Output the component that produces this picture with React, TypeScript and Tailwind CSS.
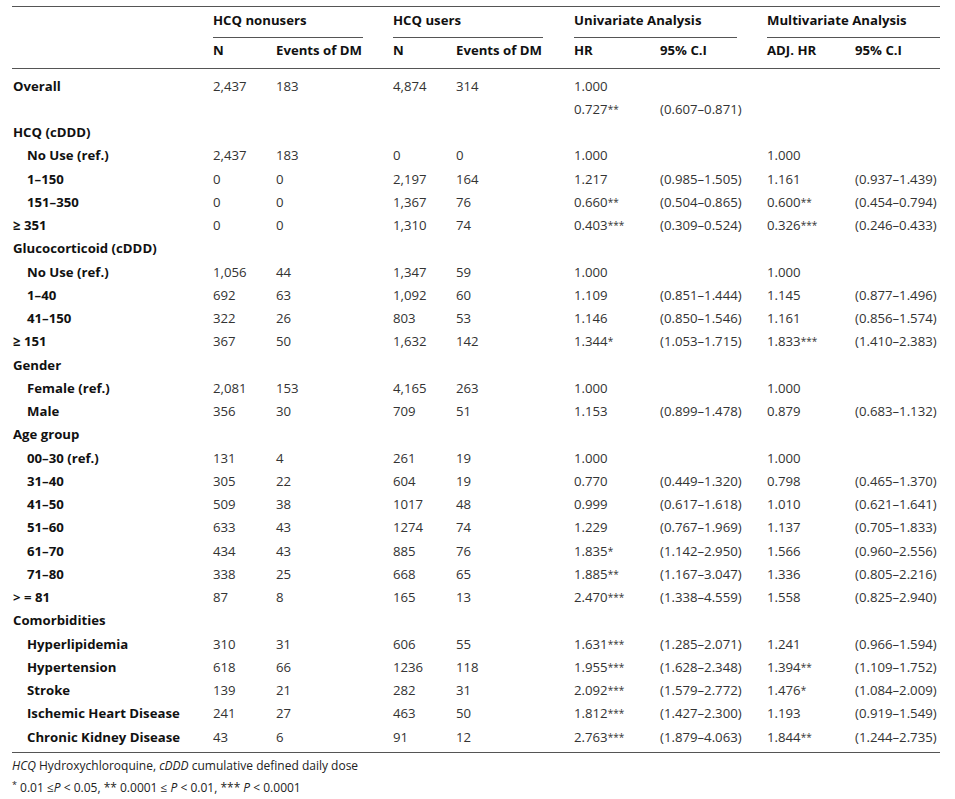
import React from 'react';

type Row = {
  label: string;
  kind: 'group' | 'sub' | 'top';
  vals?: string[];
};

const GRID = 'grid grid-cols-[201px_63px_117px_63px_118px_86px_107px_88px_85px]';

// value strings: trailing asterisks are rendered as superscript
const rows: Row[] = [
  { label: 'Overall', kind: 'top', vals: ['2,437', '183', '4,874', '314', '1.000', '', '', ''] },
  { label: '', kind: 'top', vals: ['', '', '', '', '0.727**', '(0.607–0.871)', '', ''] },
  { label: 'HCQ (cDDD)', kind: 'group' },
  { label: 'No Use (ref.)', kind: 'sub', vals: ['2,437', '183', '0', '0', '1.000', '', '1.000', ''] },
  { label: '1–150', kind: 'sub', vals: ['0', '0', '2,197', '164', '1.217', '(0.985–1.505)', '1.161', '(0.937–1.439)'] },
  { label: '151–350', kind: 'sub', vals: ['0', '0', '1,367', '76', '0.660**', '(0.504–0.865)', '0.600**', '(0.454–0.794)'] },
  { label: '≥ 351', kind: 'top', vals: ['0', '0', '1,310', '74', '0.403***', '(0.309–0.524)', '0.326***', '(0.246–0.433)'] },
  { label: 'Glucocorticoid (cDDD)', kind: 'group' },
  { label: 'No Use (ref.)', kind: 'sub', vals: ['1,056', '44', '1,347', '59', '1.000', '', '1.000', ''] },
  { label: '1–40', kind: 'sub', vals: ['692', '63', '1,092', '60', '1.109', '(0.851–1.444)', '1.145', '(0.877–1.496)'] },
  { label: '41–150', kind: 'sub', vals: ['322', '26', '803', '53', '1.146', '(0.850–1.546)', '1.161', '(0.856–1.574)'] },
  { label: '≥ 151', kind: 'top', vals: ['367', '50', '1,632', '142', '1.344*', '(1.053–1.715)', '1.833***', '(1.410–2.383)'] },
  { label: 'Gender', kind: 'group' },
  { label: 'Female (ref.)', kind: 'sub', vals: ['2,081', '153', '4,165', '263', '1.000', '', '1.000', ''] },
  { label: 'Male', kind: 'sub', vals: ['356', '30', '709', '51', '1.153', '(0.899–1.478)', '0.879', '(0.683–1.132)'] },
  { label: 'Age group', kind: 'group' },
  { label: '00–30 (ref.)', kind: 'sub', vals: ['131', '4', '261', '19', '1.000', '', '1.000', ''] },
  { label: '31–40', kind: 'sub', vals: ['305', '22', '604', '19', '0.770', '(0.449–1.320)', '0.798', '(0.465–1.370)'] },
  { label: '41–50', kind: 'sub', vals: ['509', '38', '1017', '48', '0.999', '(0.617–1.618)', '1.010', '(0.621–1.641)'] },
  { label: '51–60', kind: 'sub', vals: ['633', '43', '1274', '74', '1.229', '(0.767–1.969)', '1.137', '(0.705–1.833)'] },
  { label: '61–70', kind: 'sub', vals: ['434', '43', '885', '76', '1.835*', '(1.142–2.950)', '1.566', '(0.960–2.556)'] },
  { label: '71–80', kind: 'sub', vals: ['338', '25', '668', '65', '1.885**', '(1.167–3.047)', '1.336', '(0.805–2.216)'] },
  { label: '> = 81', kind: 'top', vals: ['87', '8', '165', '13', '2.470***', '(1.338–4.559)', '1.558', '(0.825–2.940)'] },
  { label: 'Comorbidities', kind: 'group' },
  { label: 'Hyperlipidemia', kind: 'sub', vals: ['310', '31', '606', '55', '1.631***', '(1.285–2.071)', '1.241', '(0.966–1.594)'] },
  { label: 'Hypertension', kind: 'sub', vals: ['618', '66', '1236', '118', '1.955***', '(1.628–2.348)', '1.394**', '(1.109–1.752)'] },
  { label: 'Stroke', kind: 'sub', vals: ['139', '21', '282', '31', '2.092***', '(1.579–2.772)', '1.476*', '(1.084–2.009)'] },
  { label: 'Ischemic Heart Disease', kind: 'sub', vals: ['241', '27', '463', '50', '1.812***', '(1.427–2.300)', '1.193', '(0.919–1.549)'] },
  { label: 'Chronic Kidney Disease', kind: 'sub', vals: ['43', '6', '91', '12', '2.763***', '(1.879–4.063)', '1.844**', '(1.244–2.735)'] },
];

function Value({ v }: { v: string }) {
  const m = v.match(/^(.*?)(\*+)$/);
  if (!m) return <>{v}</>;
  return (
    <>
      {m[1]}
      <sup className="text-[10px] relative top-[-1px]">{m[2]}</sup>
    </>
  );
}

export default function App() {
  return (
    <div className="w-[955px] h-[799px] bg-white font-['Open_Sans',sans-serif] text-[13.2px]">
      <div className="ml-[12px] w-[928px] pt-[6px]">
        {/* header */}
        <div className="border-t border-[#555]">
          <div className={`${GRID} h-[31px] font-bold text-[#111]`}>
            <div />
            <div className="col-span-2 mr-[30px] border-b border-[#555] pt-[4px] leading-[18px]">HCQ nonusers</div>
            <div className="col-span-2 mr-[31px] border-b border-[#555] pt-[4px] leading-[18px]">HCQ users</div>
            <div className="col-span-2 mr-[30px] border-b border-[#555] pt-[4px] leading-[18px]">Univariate Analysis</div>
            <div className="col-span-2 border-b border-[#555] pt-[4px] leading-[18px]">Multivariate Analysis</div>
          </div>
          <div className={`${GRID} h-[31px] font-bold text-[#111] border-b border-[#555] pt-[3px] leading-[18px]`}>
            <div />
            <div>N</div>
            <div>Events of DM</div>
            <div>N</div>
            <div>Events of DM</div>
            <div>HR</div>
            <div>95% C.I</div>
            <div>ADJ. HR</div>
            <div>95% C.I</div>
          </div>
        </div>

        {/* body */}
        <div className="pt-[5px] pb-[4px] border-b border-[#555]">
          {rows.map((r, i) => (
            <div key={i} className={`${GRID} h-[23.25px] items-center leading-[18px]`}>
              <div className={`font-bold text-[#111] ${r.kind === 'sub' ? 'pl-[15px]' : 'pl-[1px]'}`}>{r.label}</div>
              {(r.vals ?? []).map((v, j) => (
                <div key={j} className="text-[#333]">
                  <Value v={v} />
                </div>
              ))}
            </div>
          ))}
        </div>

        {/* footnotes */}
        <div className="text-[12px] text-[#222] leading-[22px] pt-[2px]">
          <div>
            <i>HCQ</i> Hydroxychloroquine, <i>cDDD</i> cumulative defined daily dose
          </div>
          <div>
            <sup className="text-[9px]">*</sup> 0.01 ≤<i>P</i> &lt; 0.05, ** 0.0001 ≤ <i>P</i> &lt; 0.01, *** <i>P</i> &lt; 0.0001
          </div>
        </div>
      </div>
    </div>
  );
}
